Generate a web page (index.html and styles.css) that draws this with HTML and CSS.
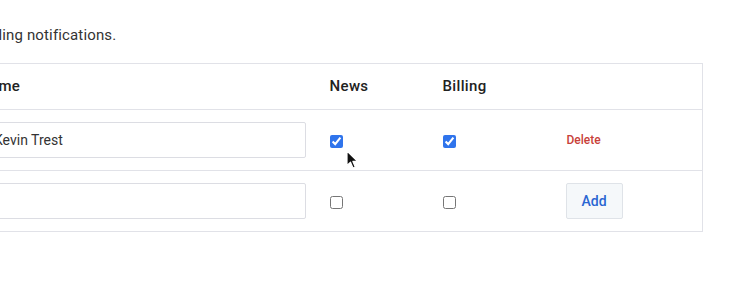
FILE: index.html
```html
<!DOCTYPE html>
<html lang="en">
<head>
  <meta charset="UTF-8">
  <title>Notification recipients</title>
  <link rel="stylesheet" href="styles.css">
</head>
<body>

  <div class="panel">
    <p class="intro">Choose who receives news and billing notifications.</p>

    <table class="recipients">
      <colgroup>
        <col class="col-name">
        <col class="col-news">
        <col class="col-billing">
        <col class="col-action">
      </colgroup>
      <thead>
        <tr>
          <th>Name</th>
          <th>News</th>
          <th>Billing</th>
          <th></th>
        </tr>
      </thead>
      <tbody>
        <tr>
          <td><input type="text" class="name-input" value="Kevin Trest"></td>
          <td><input type="checkbox" checked></td>
          <td><input type="checkbox" checked></td>
          <td><a href="#" class="delete">Delete</a></td>
        </tr>
        <tr>
          <td><input type="text" class="name-input"></td>
          <td><input type="checkbox"></td>
          <td><input type="checkbox"></td>
          <td><button class="add">Add</button></td>
        </tr>
      </tbody>
    </table>
  </div>

  <svg class="cursor" width="14" height="20" viewBox="0 0 14 20">
    <path d="M1 1 L1 15.5 L4.5 12.2 L7 18 L9.3 17 L6.9 11.4 L11.5 11.4 Z" fill="#111" stroke="#fff" stroke-width="1.2" stroke-linejoin="round"/>
  </svg>

</body>
</html>
```

FILE: styles.css
```css
body {
  font-family: Roboto, "Liberation Sans", sans-serif;
  background: #fff;
  color: #333;
  margin: 0;
  padding: 0;
  overflow: hidden;
}

.panel {
  width: 736px;
  margin: 0 0 0 -34px;
  padding-top: 26px;
}

.intro {
  font-size: 15px;
  letter-spacing: 0.15px;
  line-height: 18px;
  margin: 0 0 19px 0;
  text-indent: -201px;
}

.recipients {
  width: 736px;
  border-collapse: collapse;
  table-layout: fixed;
  border: 1px solid #e1e2e8;
}

.col-name { width: 351px; }
.col-news { width: 113px; }
.col-billing { width: 124px; }
.col-action { width: 148px; }

th {
  text-align: left;
  font-size: 15px;
  font-weight: 500;
  letter-spacing: 0.35px;
  color: #222;
  padding: 12px;
  line-height: 21px;
  border-bottom: 1px solid #e1e2e8;
}

td {
  padding: 12px;
  vertical-align: middle;
  border-bottom: 1px solid #e1e2e8;
}

.name-input {
  box-sizing: border-box;
  width: 100%;
  height: 36px;
  padding: 0 12px 0 14px;
  border: 1px solid #dcdde3;
  border-radius: 2px;
  font-family: inherit;
  font-size: 14px;
  color: #333;
}

input[type="checkbox"] {
  width: 13px;
  height: 13px;
  margin: 0;
  vertical-align: middle;
  accent-color: #2f74ec;
}

.delete {
  display: inline-block;
  margin-top: -2px;
  color: #c8413a;
  font-size: 12px;
  font-weight: 500;
  text-decoration: none;
  vertical-align: middle;
}

.add {
  width: 57px;
  height: 36px;
  margin-left: -1px;
  background: #f5f8fa;
  border: 1px solid #dfe3e8;
  border-radius: 2px;
  color: #2a66d2;
  font-family: inherit;
  font-size: 14px;
  font-weight: 500;
  cursor: pointer;
}

.cursor {
  position: absolute;
  left: 346px;
  top: 150px;
}
```
